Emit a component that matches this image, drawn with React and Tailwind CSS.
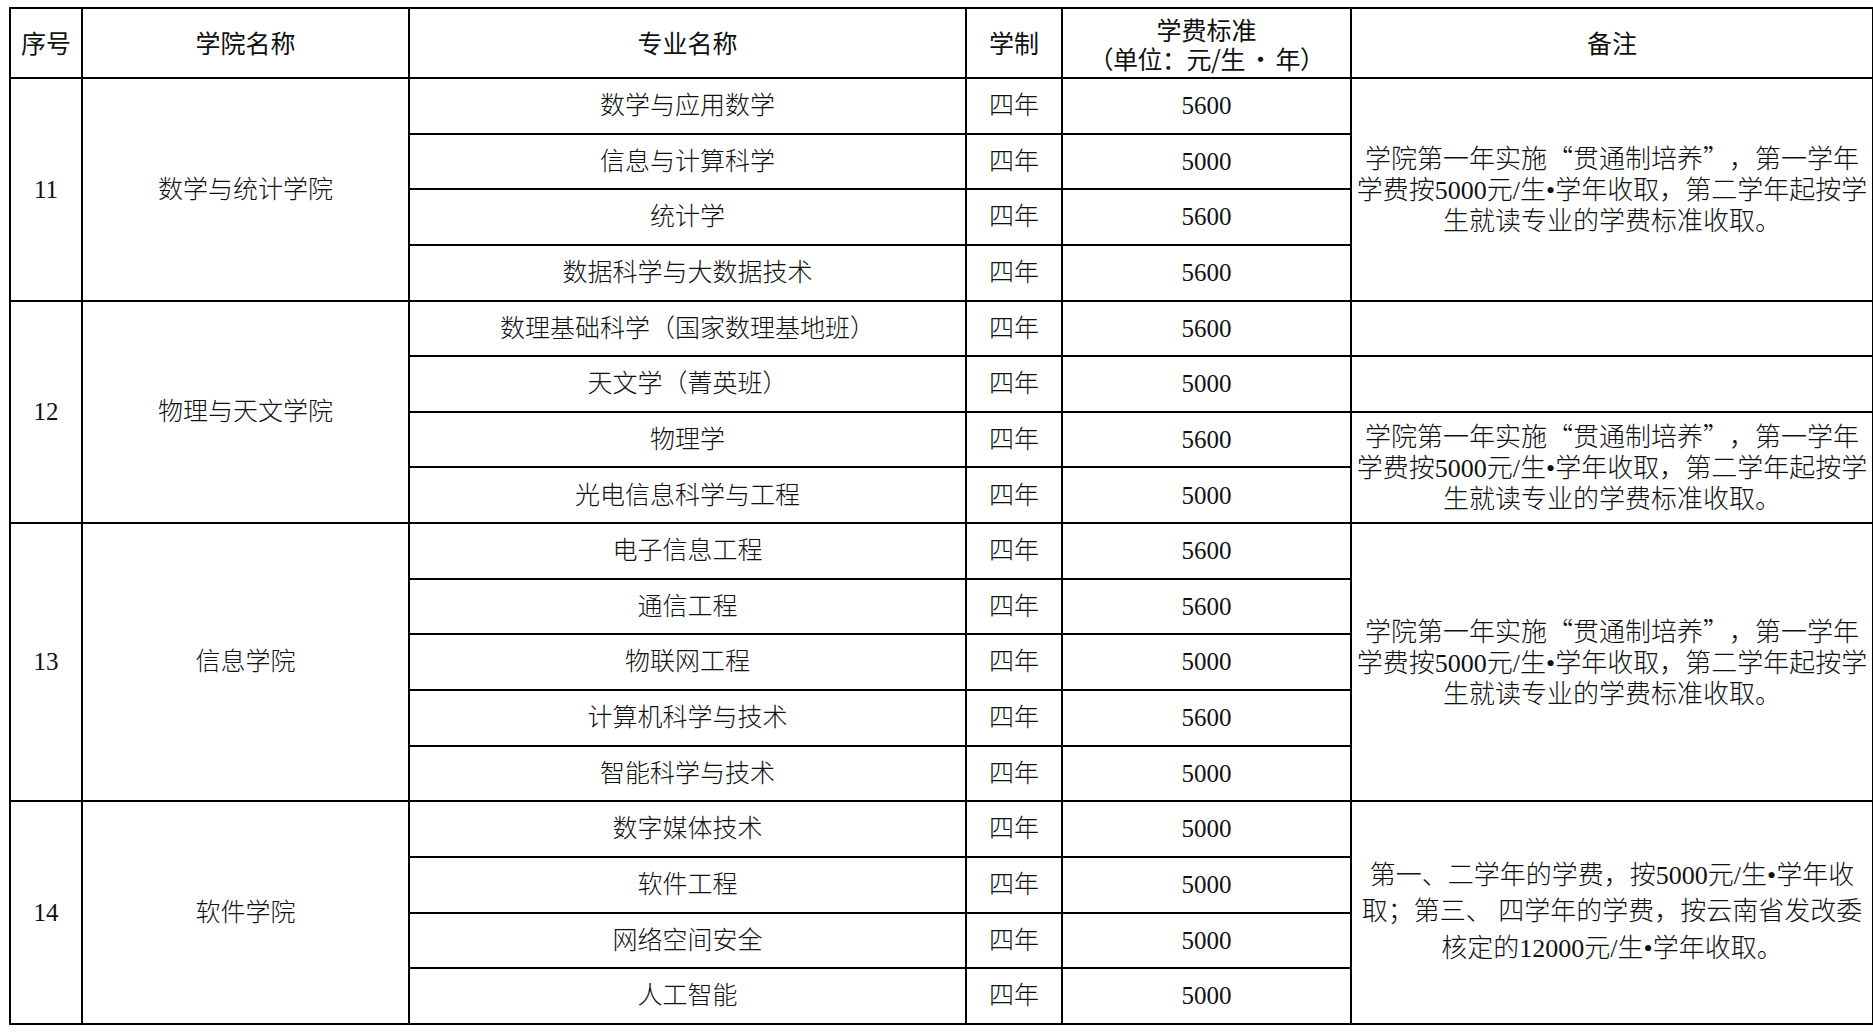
const REMARK_A = [
  "学院第一年实施“贯通制培养”，第一学年",
  "学费按5000元/生•学年收取，第二学年起按学",
  "生就读专业的学费标准收取。",
];

const REMARK_B = [
  "第一、二学年的学费，按5000元/生•学年收",
  "取；第三、 四学年的学费，按云南省发改委",
  "核定的12000元/生•学年收取。",
];

const groups = [
  {
    no: 11,
    name: "数学与统计学院",
    majors: [
      ["数学与应用数学", 5600],
      ["信息与计算科学", 5000],
      ["统计学", 5600],
      ["数据科学与大数据技术", 5600],
    ],
    remarks: [{ span: 4, lines: REMARK_A, leading: "leading-[31px]" }],
  },
  {
    no: 12,
    name: "物理与天文学院",
    majors: [
      ["数理基础科学（国家数理基地班）", 5600],
      ["天文学（菁英班）", 5000],
      ["物理学", 5600],
      ["光电信息科学与工程", 5000],
    ],
    remarks: [
      { span: 1 },
      { span: 1 },
      { span: 2, lines: REMARK_A, leading: "leading-[31px]" },
    ],
  },
  {
    no: 13,
    name: "信息学院",
    majors: [
      ["电子信息工程", 5600],
      ["通信工程", 5600],
      ["物联网工程", 5000],
      ["计算机科学与技术", 5600],
      ["智能科学与技术", 5000],
    ],
    remarks: [{ span: 5, lines: REMARK_A, leading: "leading-[31px]" }],
  },
  {
    no: 14,
    name: "软件学院",
    majors: [
      ["数字媒体技术", 5000],
      ["软件工程", 5000],
      ["网络空间安全", 5000],
      ["人工智能", 5000],
    ],
    remarks: [{ span: 4, lines: REMARK_B, leading: "leading-[36.5px]" }],
  },
];

// remark cells start on these row indexes inside each group
function remarkAt(group, i) {
  let row = 0;
  for (const r of group.remarks) {
    if (row === i) return r;
    row += r.span;
  }
  return null;
}

// chinese quotes take a full em in the original, so give them the CJK face
function RemarkLine({ text }) {
  const parts = text.split(/([“”])/);
  return (
    <div className="whitespace-nowrap">
      {parts.map((p, i) =>
        p === "“" ? (
          <span key={i} className="inline-block w-[26px] text-right font-['Noto_Sans_CJK_SC',serif]">“</span>
        ) : p === "”" ? (
          <span key={i} className="inline-block w-[26px] text-left font-['Noto_Sans_CJK_SC',serif]">”</span>
        ) : (
          <span key={i}>{p}</span>
        )
      )}
    </div>
  );
}

const cell = "border-2 border-black text-center align-middle p-0";
const head = "border-2 border-black text-center align-middle p-0 font-['Noto_Sans_CJK_SC',sans-serif] font-normal text-[25px] text-[#111]";

export default function App() {
  return (
    <div className="w-full h-[1036px] bg-white overflow-hidden pt-[7px] pl-[9px]">
      <table className="table-fixed border-collapse w-[1863px] font-['Liberation_Serif','Noto_Sans_CJK_SC',serif] text-[25px] font-light text-[#111]">
        <colgroup>
          <col className="w-[72px]" />
          <col className="w-[327px]" />
          <col className="w-[557px]" />
          <col className="w-[96px]" />
          <col className="w-[289px]" />
          <col className="w-[522px]" />
        </colgroup>
        <thead>
          <tr className="h-[70px]">
            <th className={head}>序号</th>
            <th className={head}>学院名称</th>
            <th className={head}>专业名称</th>
            <th className={head}>学制</th>
            <th className={head + " leading-[29px] pt-[2px]"}>
              <div>学费标准</div>
              <div className="tracking-[-0.5px]">（单位：元/生<span className="mx-[3px]">•</span>年）</div>
            </th>
            <th className={head}>备注</th>
          </tr>
        </thead>
        <tbody>
          {groups.map((g) =>
            g.majors.map(([major, fee], i) => {
              const r = remarkAt(g, i);
              return (
                <tr key={g.no + major} className="h-[55.65px]">
                  {i === 0 && (
                    <>
                      <td rowSpan={g.majors.length} className={cell}>{g.no}</td>
                      <td rowSpan={g.majors.length} className={cell}>{g.name}</td>
                    </>
                  )}
                  <td className={cell}>{major}</td>
                  <td className={cell}>四年</td>
                  <td className={cell}>{fee}</td>
                  {r && (
                    <td rowSpan={r.span} className={cell + " text-[26px] " + (r.leading || "")}>
                      {r.lines && r.lines.map((line) => <RemarkLine key={line} text={line} />)}
                    </td>
                  )}
                </tr>
              );
            })
          )}
        </tbody>
      </table>
    </div>
  );
}
